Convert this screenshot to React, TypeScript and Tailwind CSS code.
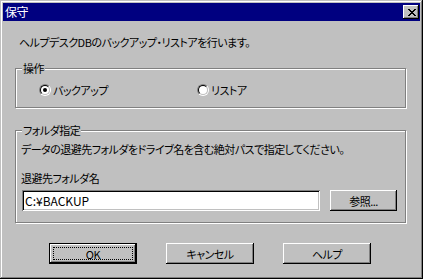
import React from 'react';

const raised = 'shadow-[inset_-1px_-1px_#000,inset_1px_1px_#fff,inset_-2px_-2px_#808080]';

function CloseGlyph() {
    // 8x7 pixel X, as on the old caption button
    const rows = ['11000011', '01100110', '00111100', '00011000', '00111100', '01100110', '11000011'];
    return (
        <svg width="8" height="7" viewBox="0 0 8 7" shapeRendering="crispEdges">
            {rows.map((r, y) =>
                r.split('').map((c, x) => (c === '1' ? <rect key={`${x}-${y}`} x={x} y={y} width="1" height="1" fill="#000" /> : null))
            )}
        </svg>
    );
}

function Radio({ checked, label, className = '' }: { checked?: boolean; label: string; className?: string }) {
    return (
        <div className={`flex items-center gap-[2px] ${className}`}>
            <div className="w-[12px] h-[12px] rounded-full border border-t-[#808080] border-l-[#808080] border-r-white border-b-white">
                <div className="w-full h-full rounded-full border border-t-black border-l-black border-r-[#c0c0c0] border-b-[#c0c0c0] bg-white flex items-center justify-center">
                    {checked && <div className="w-[4px] h-[4px] rounded-full bg-black" />}
                </div>
            </div>
            <span className="leading-[14px]">{label}</span>
        </div>
    );
}

function Group({ title, className, children }: { title: string; className: string; children: React.ReactNode }) {
    return (
        <div className={`relative border border-[#808080] shadow-[1px_1px_0_#fff,inset_1px_1px_0_#fff] ${className}`}>
            <span className="absolute -top-[8px] left-[6px] bg-[#c0c0c0] px-[1px] leading-[14px]">{title}</span>
            {children}
        </div>
    );
}

function Button({ label, isDefault, className = '' }: { label: string; isDefault?: boolean; className?: string }) {
    return (
        <button
            className={`h-[21px] bg-[#c0c0c0] flex items-center justify-center leading-[14px] ${raised} ${isDefault ? 'border border-black p-[3px]' : ''} ${className}`}
        >
            {isDefault ? (
                <span className="w-full h-full border border-dotted border-black flex items-center justify-center">{label}</span>
            ) : (
                label
            )}
        </button>
    );
}

export default function App() {
    return (
        <div className="w-[423px] h-[279px] bg-[#c0c0c0] p-[3px] flex flex-col text-[11px] tracking-[-0.5px] text-black font-['Noto_Sans_CJK_JP',sans-serif] [font-feature-settings:'palt'] shadow-[inset_-1px_-1px_#000,inset_1px_1px_#c0c0c0,inset_-2px_-2px_#808080,inset_2px_2px_#fff]">
            {/* Caption */}
            <div className="h-[18px] bg-[#000080] flex items-center justify-between shrink-0">
                <span className="text-white text-[12px] pl-[2px] leading-[14px]">保守</span>
                <div className={`w-[16px] h-[14px] mr-[1px] bg-[#c0c0c0] flex items-center justify-center pl-[1px] ${raised}`}>
                    <CloseGlyph />
                </div>
            </div>

            <div className="flex flex-col pl-[12px] pr-[14px]">
                <p className="mt-[14px] ml-[4px] leading-[14px]">ヘルプデスクDBのバックアップ・リストアを行います。</p>

                <Group title="操作" className="mt-[19px] h-[40px]">
                    <div className="flex pt-[14px] pl-[23px]">
                        <Radio checked label="バックアップ" className="w-[158px]" />
                        <Radio label="リストア" />
                    </div>
                </Group>

                <Group title="フォルダ指定" className="mt-[22px] h-[93px] pl-[5px] pt-[11px]">
                    <p className="leading-[14px]">データの退避先フォルダをドライブ名を含む絶対パスで指定してください。</p>
                    <p className="leading-[14px] mt-[15px]">退避先フォルダ名</p>
                    <div className="flex mt-[5px] gap-[10px]">
                        <div className="ml-[1px] w-[298px] h-[21px] bg-white flex items-center pl-[3px] leading-[14px] text-[12px] tracking-normal shadow-[inset_1px_1px_#808080,inset_-1px_-1px_#fff,inset_2px_2px_#000,inset_-2px_-2px_#c0c0c0]">
                            C:¥BACKUP
                        </div>
                        <Button label="参照..." className="w-[67px]" />
                    </div>
                </Group>
            </div>

            <div className="flex pl-[46px] gap-[29px] mt-[20px]">
                <Button label="OK" isDefault className="w-[88px]" />
                <Button label="キャンセル" className="w-[88px]" />
                <Button label="ヘルプ" className="w-[88px]" />
            </div>
        </div>
    );
}
